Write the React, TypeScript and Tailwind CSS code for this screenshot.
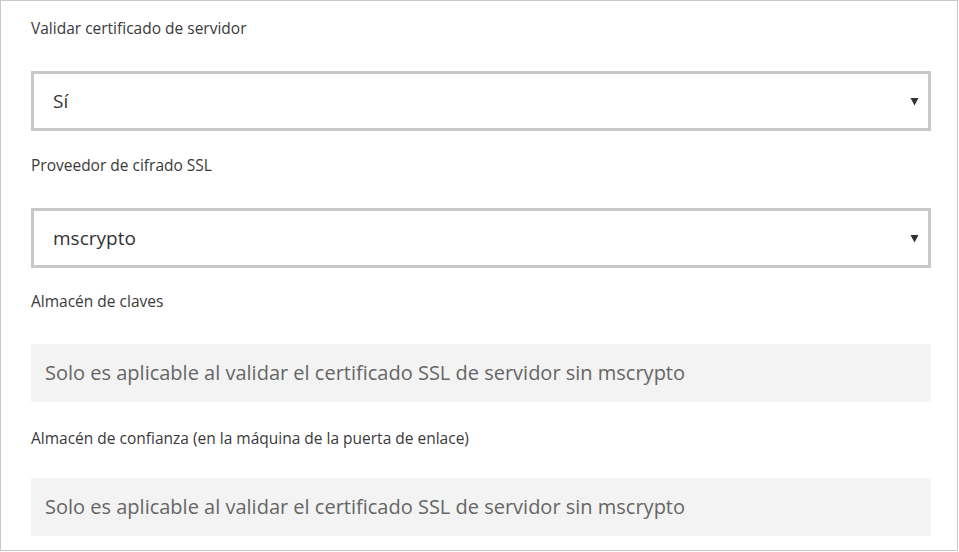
export default function App() {
  const font = { fontFamily: '"Open Sans", "Noto Sans", sans-serif' };
  return (
    <div className="w-[959px] h-[552px] bg-white" style={font}>
      <div className="w-[958px] h-[551px] border border-[#c8c8c8] pl-[30px] pr-[26px] pt-[17px] flex flex-col">
        <Label text="Validar certificado de servidor" />
        <Select value="Sí" className="mt-[33px]" />
        <Label text="Proveedor de cifrado SSL" className="mt-[24px]" />
        <Select value="mscrypto" className="mt-[33px]" />
        <Label text="Almacén de claves" className="mt-[23px]" />
        <Disabled className="mt-[33px]" />
        <Label text="Almacén de confianza (en la máquina de la puerta de enlace)" className="mt-[26px]" />
        <Disabled className="mt-[30px]" />
      </div>
    </div>
  );
}

function Label({ text, className = "" }: { text: string; className?: string }) {
  return <div className={`h-5 leading-5 text-[15.5px] text-[#3a3a3a] ${className}`}>{text}</div>;
}

function Select({ value, className = "" }: { value: string; className?: string }) {
  return (
    <div className={`h-[60px] border-[3px] border-[#c8c8c8] flex items-center justify-between pl-[19px] pr-[9px] ${className}`}>
      <span className="text-[19px] text-[#333]">{value}</span>
      <svg width="9" height="9" viewBox="0 0 9 9" className="mt-px">
        <path d="M0.5 1 L8.5 1 L4.5 8.5 Z" fill="#333" />
      </svg>
    </div>
  );
}

function Disabled({ className = "" }: { className?: string }) {
  return (
    <div className={`h-[58px] bg-[#f3f3f3] flex items-center pl-[14px] ${className}`}>
      <span className="text-[20px] text-[#666]">
        Solo es aplicable al validar el certificado SSL de servidor sin mscrypto
      </span>
    </div>
  );
}
